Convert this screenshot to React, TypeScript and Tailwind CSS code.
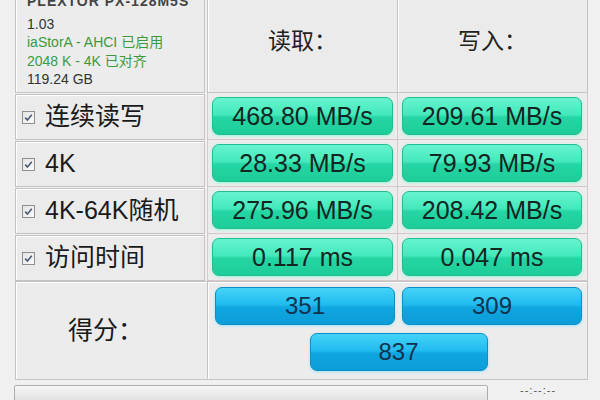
import React from 'react';

const rows = [
  { label: '连续读写', read: '468.80 MB/s', write: '209.61 MB/s' },
  { label: '4K', read: '28.33 MB/s', write: '79.93 MB/s' },
  { label: '4K-64K随机', read: '275.96 MB/s', write: '208.42 MB/s' },
  { label: '访问时间', read: '0.117 ms', write: '0.047 ms' },
];

const Check = () => (
  <div className="w-[13px] h-[13px] border border-[#8e8f8f] bg-gradient-to-br from-[#e4e4e4] to-[#fbfbfb] flex items-center justify-center shrink-0">
    <svg width="11" height="11" viewBox="0 0 11 11">
      <path d="M2.2 5.6 L4.4 8 L8.8 2.8" fill="none" stroke="#4a5a78" strokeWidth="1.6" />
    </svg>
  </div>
);

const Green = ({ v }: { v: string }) => (
  <div className="h-full rounded-[7px] border border-[#22bd90] bg-[linear-gradient(#66f4cf_0%,#44e9bb_46%,#25d5a3_54%,#1dcd99_100%)] shadow-[0_1px_3px_#9af5da] flex items-center justify-center text-[25px] text-[#142622] leading-none">
    {v}
  </div>
);

const Blue = ({ v, w }: { v: string; w: string }) => (
  <div className={`${w} h-[38px] rounded-[7px] border border-[#0b8fc8] bg-[linear-gradient(#45d3f8_0%,#20bbef_46%,#0fa6e1_54%,#0c9dd8_100%)] shadow-[0_1px_3px_#9ee4fb] flex items-center justify-center text-[24px] text-[#13324d] leading-none`}>
    {v}
  </div>
);

export default function App() {
  return (
    <div className="w-[600px] h-[400px] overflow-hidden bg-[#f0f0f0] pl-[15px] font-['Liberation_Sans','Noto_Sans_CJK_SC',sans-serif]">
      <div className="-mt-[12px] w-[573px] grid grid-cols-[192px_190px_191px] grid-rows-[105px_47px_47px_47px_47px]">
        <div className="border border-[#c4c4c4] shadow-[inset_1px_1px_0_#fff] bg-[#ececec] pl-[11px] pt-[3px] text-[14px] leading-[18.5px] text-[#333] mr-[2px]">
          <div className="mb-[4px] font-bold text-[#444] tracking-[1px]">PLEXTOR PX-128M5S</div>
          <div>1.03</div>
          <div className="text-[#3c9a3c]">iaStorA - AHCI 已启用</div>
          <div className="text-[#3c9a3c]">2048 K - 4K 已对齐</div>
          <div>119.24 GB</div>
        </div>
        <div className="border-l border-b border-[#c4c4c4] shadow-[inset_1px_0_0_#fff] bg-[#ebebeb] flex items-center justify-center pt-[3px] text-[23px] text-[#222]">
          读取：
        </div>
        <div className="border-l border-r border-b border-[#c4c4c4] shadow-[inset_1px_0_0_#fff] bg-[#ebebeb] flex items-center justify-center pt-[3px] text-[23px] text-[#222]">
          写入：
        </div>
        {rows.map((r) => (
          <React.Fragment key={r.label}>
            <div className="border border-[#c2c2c2] shadow-[inset_1px_1px_0_#fff] bg-[#ebebeb] flex items-center gap-[10px] pl-[6px] text-[25px] text-[#1a1a1a] mt-[1px] mr-[2px]">
              <Check />
              <span>{r.label}</span>
            </div>
            <div className="border-l border-b border-[#d6c8c8] bg-[#ececec] px-[4px] py-[4px]">
              <Green v={r.read} />
            </div>
            <div className="border-l border-r border-b border-[#d6c8c8] bg-[#ececec] pl-[4px] pr-[5px] py-[4px]">
              <Green v={r.write} />
            </div>
          </React.Fragment>
        ))}
      </div>
      <div className="w-[573px] h-[99px] grid grid-cols-[192px_381px] border border-[#c4c4c4] shadow-[inset_1px_1px_0_#fff] bg-[#ececec]">
        <div className="border-r border-[#c4c4c4] flex items-center justify-center pr-[12px] text-[25px] text-[#1a1a1a]">
          得分：
        </div>
        <div className="shadow-[inset_1px_0_0_#fff] flex flex-col items-center pt-[5px] gap-[8px]">
          <div className="flex gap-[7px]">
            <Blue v="351" w="w-[180px]" />
            <Blue v="309" w="w-[180px]" />
          </div>
          <Blue v="837" w="w-[178px]" />
        </div>
      </div>
      <div className="flex items-start mt-[5px] -ml-[1px]">
        <div className="w-[474px] h-[18px] rounded-[2px] border border-[#adadad] bg-[linear-gradient(#f6f6f6,#dedede)]" />
        <div className="ml-[32px] -mt-[1px] text-[11px] leading-[12px] text-[#555] tracking-[1px]">--:--:--</div>
      </div>
    </div>
  );
}
